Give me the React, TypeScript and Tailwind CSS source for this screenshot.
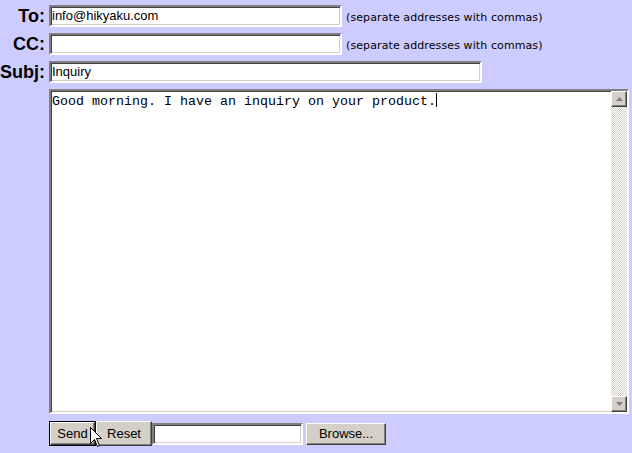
import React from 'react';

const inset =
  'border-2 border-t-[#808080] border-l-[#808080] border-b-[#ffffff] border-r-[#ffffff] shadow-[inset_1px_1px_0_#404040,inset_-1px_-1px_0_#d4d0c8]';

const btn =
  'bg-[#d4d0c8] text-black text-[13px] border border-t-white border-l-white border-b-[#404040] border-r-[#404040] shadow-[inset_-1px_-1px_0_#808080]';

const Hint = () => (
  <span
    className="ml-[4px] pt-[5px] text-[11px] tracking-[0.1px] text-black"
    style={{ fontFamily: '"DejaVu Sans", Verdana, sans-serif' }}
  >
    (separate addresses with commas)
  </span>
);

const Field = ({ label, value, width, hint }: { label: string; value: string; width: string; hint?: boolean }) => (
  <div className="flex items-center h-[22px]">
    <label className="w-[45px] text-right text-[18px] font-bold leading-none mr-[4px]">{label}</label>
    <div className={`${inset} ${width} h-[22px] bg-white flex items-center px-[1px] text-[13px]`}>{value}</div>
    {hint && <Hint />}
  </div>
);

const Arrow = ({ up }: { up?: boolean }) => (
  <div className={`${btn} w-[16px] h-[16px] flex items-center justify-center`}>
    <svg width="7" height="4" viewBox="0 0 7 4">
      {up ? <path d="M3.5 0 L7 4 L0 4 Z" fill="#808080" /> : <path d="M0 0 L7 0 L3.5 4 Z" fill="#808080" />}
    </svg>
  </div>
);

export default function App() {
  return (
    <div
      className="relative w-[632px] h-[453px] bg-[#ccccff] pt-[5px] overflow-hidden text-black"
      style={{ fontFamily: '"Liberation Sans", Arial, sans-serif' }}
    >
      <div className="flex flex-col gap-[6px]">
        <Field label="To:" value="info@hikyaku.com" width="w-[293px]" hint />
        <Field label="CC:" value="" width="w-[293px]" hint />
        <Field label="Subj:" value="Inquiry" width="w-[433px]" />
        <div className="flex">
          <div className="w-[49px]" />
          <div className={`${inset} w-[580px] h-[325px] bg-white flex`}>
            <div
              className="flex-1 pl-[1px] pt-[2px] text-[13.33px] leading-[16px]"
              style={{ fontFamily: '"Liberation Mono", "Courier New", monospace' }}
            >
              Good morning. I have an inquiry on your product.
              <span className="inline-block w-[1px] h-[14px] bg-black align-[-2px]" />
            </div>
            <div className="w-[16px] flex flex-col bg-[repeating-conic-gradient(#d4d0c8_0_25%,#ffffff_0_50%)] bg-[length:2px_2px]">
              <Arrow up />
              <div className="flex-1" />
              <Arrow />
            </div>
          </div>
        </div>
      </div>
      <div className="flex items-center mt-[7px] ml-[49px] h-[25px]">
        <button className={`${btn} w-[47px] h-[25px] outline outline-1 outline-black -outline-offset-1 border-2`}>Send</button>
        <button className={`${btn} w-[56px] h-[25px]`}>Reset</button>
        <div className={`${inset} w-[151px] h-[22px] bg-white`} />
        <button className={`${btn} ml-[3px] w-[80px] h-[22px]`}>Browse...</button>
      </div>
      <svg className="absolute left-[90px] top-[427px]" width="13" height="21" viewBox="0 0 13 21">
        <path d="M0.5 0.5 L0.5 16.5 L4.5 12.5 L7.5 19.5 L9.5 18.5 L6.5 11.5 L11.5 11.5 Z" fill="#fff" stroke="#000" strokeWidth="1" />
      </svg>
    </div>
  );
}
